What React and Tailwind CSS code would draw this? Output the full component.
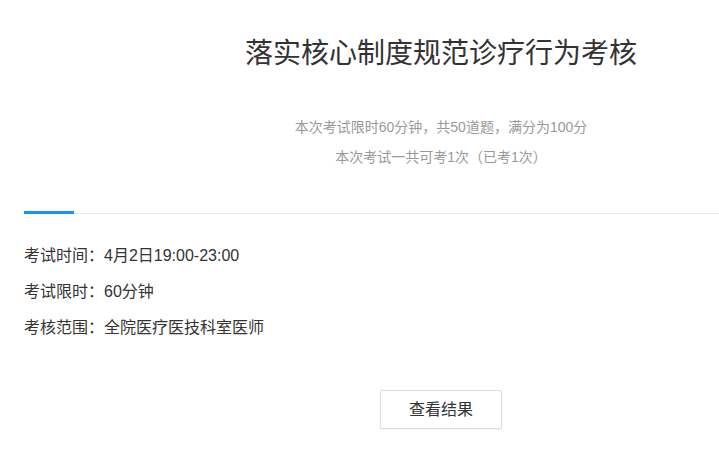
import React from 'react';

const FONT = { fontFamily: '"Liberation Sans", "Noto Sans CJK SC", sans-serif' };

const infoRows = [
  { label: '考试时间：', value: '4月2日19:00-23:00' },
  { label: '考试限时：', value: '60分钟' },
  { label: '考核范围：', value: '全院医疗医技科室医师' },
];

const App = () => {
  return (
    <div className="w-[719px] h-[468px] overflow-hidden bg-white" style={FONT}>
      <div className="w-[834px] ml-[24px]">
        {/* Header */}
        <div className="pt-[34px] text-center">
          <h1 className="text-[28px] leading-[40px] text-[#333]">落实核心制度规范诊疗行为考核</h1>
          <div className="mt-[38px] text-[14px] leading-[30px] text-[#999]">
            <p>本次考试限时60分钟，共50道题，满分为100分</p>
            <p>本次考试一共可考1次（已考1次）</p>
          </div>
        </div>

        {/* Tab line */}
        <div className="mt-[41px] relative h-px bg-[#e8e8e8]">
          <div className="absolute left-0 top-[-2px] w-[50px] h-[3px] bg-[#1890ff]" />
        </div>

        {/* Info */}
        <div className="mt-[24px] flex flex-col">
          {infoRows.map((row) => (
            <div key={row.label} className="flex h-[36px] items-center text-[16px] text-[#333]">
              <span>{row.label}</span>
              <span>{row.value}</span>
            </div>
          ))}
        </div>

        <div className="mt-[44px] flex justify-center">
          <button className="w-[122px] h-[39px] border border-[#dcdcdc] rounded-[2px] bg-white text-[16px] text-[#333] shadow-[0_1px_2px_rgba(0,0,0,0.06)]">
            查看结果
          </button>
        </div>
      </div>
    </div>
  );
};

export default App;
